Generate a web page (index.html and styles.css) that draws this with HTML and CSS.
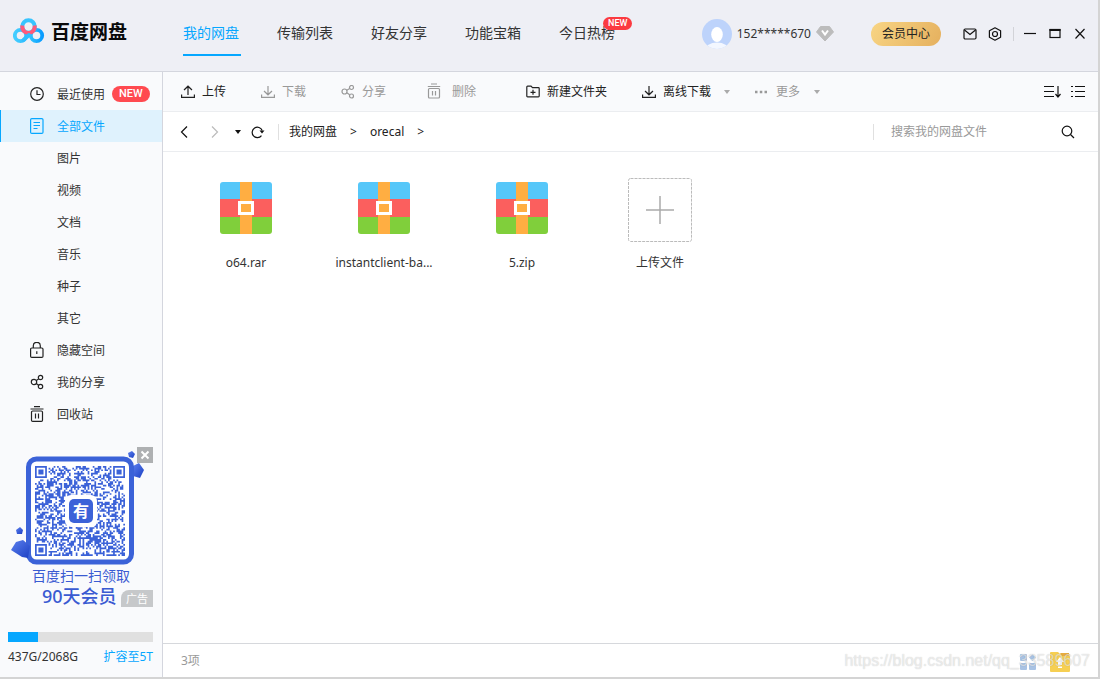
FILE: index.html
```html
<!DOCTYPE html>
<html lang="zh-CN">
<head>
<meta charset="utf-8">
<title>百度网盘</title>
<link rel="stylesheet" href="styles.css">
</head>
<body>
<div class="window">
  <header class="header">
    <div class="brand">
      <svg width="32" height="26" viewBox="0 0 32 26" fill="none">
        <defs>
          <linearGradient id="lg-left" x1="0" x2="1"><stop offset="0" stop-color="#43cdff"/><stop offset="1" stop-color="#2fbcff"/></linearGradient>
          <linearGradient id="lg-right" x1="0" x2="1"><stop offset="0" stop-color="#2cc0ff"/><stop offset="1" stop-color="#0a9cff"/></linearGradient>
        </defs>
        <circle cx="7.500" cy="17.500" r="5.700" stroke="url(#lg-left)" stroke-width="3.800"/>
        <circle cx="23.500" cy="17.500" r="5.700" stroke="url(#lg-right)" stroke-width="3.800"/>
        <circle cx="15.500" cy="8.500" r="6.300" fill="#eeeff5" stroke="#37c4ff" stroke-width="4"/>
        <path d="M9.300 7.500A6.300 6.300 0 1 0 21.700 7.500" stroke="#ff5a7b" stroke-width="4"/>
        <path d="M10.500 22L16 17" stroke="#2fbfff" stroke-width="3.800" stroke-linecap="round"/>
      </svg>
      <span class="brand-name">百度网盘</span>
    </div>
    <nav class="nav">
      <a class="nav-link nav-link--active" href="#">我的网盘</a>
      <a class="nav-link" href="#">传输列表</a>
      <a class="nav-link" href="#">好友分享</a>
      <a class="nav-link" href="#">功能宝箱</a>
      <a class="nav-link" href="#">今日热榜<span class="nav-badge">NEW</span></a>
    </nav>
    <div class="account">
      <svg width="30" height="30" viewBox="0 0 30 30">
        <defs><clipPath id="avatar-clip"><circle cx="15" cy="15" r="15"/></clipPath></defs>
        <g clip-path="url(#avatar-clip)">
          <rect width="30" height="30" fill="#bdd3fb"/>
          <ellipse cx="15" cy="31" rx="12" ry="7.500" fill="#f3f7ff"/>
          <ellipse cx="15" cy="15.500" rx="5.800" ry="7.500" fill="#fff"/>
        </g>
      </svg>
      <span class="account-name">152*****670</span>
      <svg width="18" height="16" viewBox="0 0 18 16">
        <path d="M4.500 0.500H13.500L17.500 6L9 15L0.500 6Z" fill="#bcbcbc" stroke="#bcbcbc" stroke-linejoin="round"/>
        <path d="M6 4.500L9 8.500L12 4.500" fill="none" stroke="#fff" stroke-width="2"/>
      </svg>
    </div>
    <button class="vip" type="button">会员中心</button>
    <div class="quick">
      <button class="icon-btn" type="button" aria-label="消息"><svg width="14" height="14" viewBox="0 0 14 14"><rect x="1" y="2" width="12" height="10" rx="1.200"/><path d="M1.500 3L7 7.500L12.500 3"/></svg></button>
      <button class="icon-btn" type="button" aria-label="设置"><svg width="14" height="14" viewBox="0 0 14 14"><path d="M7 0.800L12.600 3.800V10.200L7 13.200L1.400 10.200V3.800Z" stroke-linejoin="round"/><circle cx="7" cy="7" r="2.500"/></svg></button>
    </div>
    <div class="controls">
      <button class="icon-btn" type="button" aria-label="最小化"><svg width="12" height="14" viewBox="0 0 12 14"><path d="M0 6.500H12"/></svg></button>
      <button class="icon-btn" type="button" aria-label="最大化"><svg width="12" height="14" viewBox="0 0 12 14"><rect x="1" y="2.500" width="10" height="8"/><path d="M0.500 3H11.500" stroke-width="2"/></svg></button>
      <button class="icon-btn" type="button" aria-label="关闭"><svg width="12" height="14" viewBox="0 0 12 14"><path d="M1.500 2L10.500 11.500M10.500 2L1.500 11.500"/></svg></button>
    </div>
  </header>

  <div class="body">
    <aside class="sidebar">
      <nav class="menu">
        <a class="menu-item" href="#"><svg class="menu-icon" width="14" height="16" viewBox="0 0 14 16"><circle cx="7" cy="8" r="6.300"/><path d="M7 4.200V8.500H10.500"/></svg><span>最近使用</span><span class="badge">NEW</span></a>
        <a class="menu-item menu-item--active" href="#"><svg class="menu-icon" width="14" height="16" viewBox="0 0 14 16"><rect x="0.600" y="0.600" width="12.400" height="14.800" rx="1.200"/><path d="M3.500 4.500H10M3.500 7.500H10M3.500 10.500H7.500"/></svg><span>全部文件</span></a>
        <a class="menu-item menu-item--sub" href="#"><span>图片</span></a>
        <a class="menu-item menu-item--sub" href="#"><span>视频</span></a>
        <a class="menu-item menu-item--sub" href="#"><span>文档</span></a>
        <a class="menu-item menu-item--sub" href="#"><span>音乐</span></a>
        <a class="menu-item menu-item--sub" href="#"><span>种子</span></a>
        <a class="menu-item menu-item--sub" href="#"><span>其它</span></a>
        <a class="menu-item" href="#"><svg class="menu-icon" width="14" height="16" viewBox="0 0 14 16"><rect x="0.600" y="6" width="12.400" height="9.400" rx="1.200"/><path d="M3.300 6V3.800A3.500 3.500 0 0 1 10.300 3.800V6M6.800 9.300V12"/></svg><span>隐藏空间</span></a>
        <a class="menu-item" href="#"><svg class="menu-icon" width="14" height="16" viewBox="0 0 14 16"><circle cx="4" cy="8" r="2.700"/><circle cx="10.500" cy="3.500" r="2.200"/><circle cx="10.500" cy="12.500" r="2.200"/><path d="M6.300 6.500L8.600 4.900M6.300 9.500L8.600 11.200"/></svg><span>我的分享</span></a>
        <a class="menu-item" href="#"><svg class="menu-icon" width="14" height="16" viewBox="0 0 14 16"><path d="M4 0.700H10M0.500 3H13.500"/><rect x="1.500" y="5" width="11" height="10.400" rx="1.200"/><path d="M5.500 7.500V12.500M8.500 7.500V12.500"/></svg><span>回收站</span></a>
      </nav>

      <div class="promo">
        <svg class="promo-art" width="145" height="160" viewBox="0 0 145 160">
          <defs><linearGradient id="gem" x1="0" x2="1" y2="1"><stop offset="0" stop-color="#5c80ee"/><stop offset="1" stop-color="#1c40c4"/></linearGradient></defs>
          <path d="M120 6L124 4L127 7L125 11L121 10Z" fill="url(#gem)"/>
          <path d="M125 19L131 16L136 23L132 31L125 29Z" fill="url(#gem)"/>
          <path d="M8 83L12 80L15 83L14 87L9 87Z" fill="url(#gem)"/>
          <rect x="20.500" y="12" width="103" height="103" rx="8" fill="#fff" stroke="#3b62d8" stroke-width="5"/>
          <path d="M3 103L8 95L15 93L22 99L20 111L14 110Z" fill="url(#gem)"/>
          <svg x="27" y="19" width="90" height="90" viewBox="0 0 53 53"><path id="qr" fill="#3b62d8"/></svg>
          <rect x="57" y="48" width="32" height="32" rx="6" fill="#fff"/>
          <rect x="61" y="52" width="24" height="24" rx="5" fill="#3b62d8"/>
          <text class="promo-logo" x="73" y="70" text-anchor="middle">有</text>
          <text class="promo-line" x="24" y="134">百度扫一扫领取</text>
          <text class="promo-offer" x="34" y="156">90天会员</text>
        </svg>
        <button class="promo-close" type="button" aria-label="关闭广告"><svg width="10" height="10" viewBox="0 0 10 10"><path d="M1.500 1.500L8.500 8.500M8.500 1.500L1.500 8.500"/></svg></button>
        <span class="promo-tag">广告</span>
      </div>

      <div class="storage">
        <div class="storage-bar"><div class="storage-used" style="width:21%"></div></div>
        <div class="storage-row"><span>437G/2068G</span><a class="storage-link" href="#">扩容至5T</a></div>
      </div>
    </aside>

    <main class="main">
      <div class="toolbar">
        <div class="tools">
          <button class="tool" type="button"><svg width="14" height="14" viewBox="0 0 14 14"><path d="M0.600 9.500V12.400H13.400V9.500M7 10V1.500M3 5L7 1.200L11 5"/></svg>上传</button>
          <button class="tool tool--muted" type="button"><svg width="14" height="14" viewBox="0 0 14 14"><path d="M0.600 9.500V12.400H13.400V9.500M7 1V9.500M3 6L7 9.800L11 6"/></svg>下载</button>
          <button class="tool tool--muted" type="button"><svg width="14" height="14" viewBox="0 0 14 14"><circle cx="3.500" cy="6.500" r="2.500"/><circle cx="10.500" cy="2.500" r="2"/><circle cx="10.500" cy="11" r="2"/><path d="M5.800 5.200L8.700 3.500M5.800 7.800L8.700 9.800"/></svg>分享</button>
          <button class="tool tool--muted tool--wide" type="button"><svg width="14" height="18" viewBox="0 0 14 18"><path d="M4 1H10M0.800 3.500H13.200"/><rect x="1.500" y="5.500" width="11" height="9.500" rx="1"/><path d="M5.500 8V12.500M8.500 8V12.500"/></svg>删除</button>
        </div>
        <div class="tools">
          <button class="tool" type="button"><svg width="14" height="14" viewBox="0 0 14 14"><path d="M0.800 2Q0.800 1.100 1.600 1.100H5L6.500 2.700H12.400Q13.200 2.700 13.200 3.500V11Q13.200 11.800 12.400 11.800H1.600Q0.800 11.800 0.800 11ZM7 4.800V9.800M4.500 7.300H9.500"/></svg>新建文件夹</button>
          <button class="tool" type="button"><svg width="14" height="14" viewBox="0 0 14 14"><path d="M0.600 9.500V12.400H13.400V9.500M7 1V9.500M3 6L7 9.800L11 6"/></svg>离线下载<span class="caret"></span></button>
        </div>
        <button class="tool tool--muted tool--more" type="button"><svg width="14" height="14" viewBox="0 0 14 14"><path d="M1 7H3.500M5.800 7H8.300M10.500 7H13" stroke-width="2.500"/></svg>更多<span class="caret"></span></button>
        <div class="views">
          <button class="icon-btn" type="button" aria-label="排序"><svg width="17" height="14" viewBox="0 0 17 14"><path d="M0 1.500H10M0 6.500H10M0 11.500H10M14 1V12M11.500 9L14 12L16.500 9"/></svg></button>
          <button class="icon-btn" type="button" aria-label="列表"><svg width="14" height="14" viewBox="0 0 14 14"><path d="M0 1.500H2M4 1.500H14M0 6.500H2M4 6.500H14M0 11.500H2M4 11.500H14"/></svg></button>
        </div>
      </div>

      <div class="pathbar">
        <div class="history">
          <button class="icon-btn" type="button" aria-label="后退"><svg width="8" height="14" viewBox="0 0 8 14"><path d="M7 1.500L1.500 7L7 12.500"/></svg></button>
          <button class="icon-btn icon-btn--off" type="button" aria-label="前进"><svg width="8" height="14" viewBox="0 0 8 14"><path d="M1 1.500L6.500 7L1 12.500"/></svg></button>
        </div>
        <button class="icon-btn" type="button" aria-label="历史"><span class="caret caret--dark"></span></button>
        <button class="icon-btn refresh" type="button" aria-label="刷新"><svg width="14" height="14" viewBox="0 0 14 14"><path d="M10.500 10.600A5.200 5.200 0 1 1 11.200 5.500"/><path d="M8.500 5.500H13.500L11 8.500Z" fill="currentColor" stroke="none"/></svg></button>
        <div class="crumbs"><a href="#">我的网盘</a><span>&gt;</span><a href="#">orecal</a><span>&gt;</span></div>
        <form class="search">
          <input class="search-input" type="search" aria-label="搜索" placeholder="搜索我的网盘文件">
          <button class="icon-btn" type="submit" aria-label="搜索"><svg width="14" height="14" viewBox="0 0 14 14"><circle cx="6" cy="6" r="4.800"/><path d="M9.500 9.500L13 13"/></svg></button>
        </form>
      </div>

      <div class="files">
        <a class="file" href="#"><span class="file-art"><svg width="52" height="52"><use href="#archive"/></svg></span>o64.rar</a>
        <a class="file" href="#"><span class="file-art"><svg width="52" height="52"><use href="#archive"/></svg></span>instantclient-ba...</a>
        <a class="file" href="#"><span class="file-art"><svg width="52" height="52"><use href="#archive"/></svg></span>5.zip</a>
        <button class="file" type="button"><span class="file-art"><svg width="64" height="64" viewBox="0 0 64 64" fill="none"><rect x="0.500" y="0.500" width="63" height="63" rx="2" stroke="#bbb" stroke-dasharray="3 1"/><path d="M18 32H46M32 18V46" stroke="#aaa" stroke-width="1.500"/></svg></span>上传文件</button>
      </div>

      <footer class="status">
        <span>3项</span>
        <div class="status-icons">
          <svg width="16" height="16" viewBox="0 0 16 16" fill="#a9c3e4"><rect width="7" height="7" rx="1"/><path d="M12.500 0L16 3.500L12.500 7L9 3.500Z"/><rect y="9" width="7" height="7" rx="1"/><rect x="9" y="9" width="7" height="7" rx="1"/></svg>
          <svg width="20" height="20" viewBox="0 0 20 20"><path d="M0 1Q0 0 1 0H8L10 2H19Q20 2 20 3V19Q20 20 19 20H1Q0 20 0 19Z" fill="#f6cf52"/><path d="M10 1H19V4H12Z" fill="#e6ab3f"/><path d="M10 5L14 10H12V13H8V10H6ZM8 14.500H12V16H8Z" fill="#fff"/></svg>
        </div>
        <span class="watermark">https://blog.csdn.net/qq_33589607</span>
      </footer>
    </main>
  </div>
</div>

<svg class="defs" width="0" height="0" aria-hidden="true">
  <symbol id="archive" viewBox="0 0 52 52">
    <path d="M0 17V3Q0 0 3 0H49Q52 0 52 3V17Z" fill="#56c7f9"/>
    <path d="M0 17H52V35H0Z" fill="#fb5f5e"/>
    <path d="M0 35H52V49Q52 52 49 52H3Q0 52 0 49Z" fill="#80cf3b"/>
    <path d="M20 0H32V52H20Z" fill="#ffae42"/>
    <rect x="19.500" y="20.500" width="13" height="11" fill="#ffae42" stroke="#fff" stroke-width="3"/>
  </symbol>
</svg>
<script src="qr.js"></script>
</body>
</html>
```

FILE: styles.css
```css
* { box-sizing: border-box; }

body {
  margin: 0;
  font-family: "Noto Sans", "Noto Sans CJK SC", sans-serif;
  font-size: 12px;
  line-height: 18px;
  color: #333;
  background: #d4d4d4;
}

a { color: inherit; text-decoration: none; }

button {
  padding: 0;
  border: 0;
  background: none;
  font: inherit;
  color: inherit;
}

svg { display: block; flex: none; }

.defs { position: absolute; }

.window {
  display: flex;
  flex-direction: column;
  height: calc(100vh - 2px);
  margin-right: 2px;
  background: #fff;
}

.icon-btn { display: flex; align-items: center; color: #111; }
.icon-btn svg, .tool svg, .menu-icon { fill: none; stroke: currentColor; stroke-width: 1.2px; }
.icon-btn--off { color: #bbb; }

/* Header */
.header {
  display: flex;
  align-items: center;
  height: 72px;
  padding: 0 12px 4px 13px;
  background: #eeeff5;
  border-bottom: 1px solid #d4d6de;
}

.brand { display: flex; align-items: center; gap: 6px; width: 170px; height: 60px; padding-bottom: 6px; }
.brand-name { padding-top: 2px; font-size: 19px; line-height: 28px; font-weight: 700; color: #0a0a0a; }

.nav { display: flex; gap: 36px; margin-right: auto; }
.nav-link {
  position: relative;
  width: 58px;
  padding: 11px 0;
  border-bottom: 2px solid transparent;
  font-size: 14px;
  line-height: 20px;
  white-space: nowrap;
}
.nav-link--active { color: #06a7ff; border-color: #06a7ff; }
.nav-badge {
  position: absolute;
  top: 5px;
  left: 44px;
  padding: 0 5px;
  border-radius: 7px;
  background: #fb3a40;
  color: #fff;
  font: 500 9px/13px Roboto, sans-serif;
}

.account { display: flex; align-items: center; gap: 5px; margin-right: 37px; }
.account-name { font-size: 12px; }

.vip {
  padding: 3px 11px;
  margin-right: 22px;
  border-radius: 12px;
  background: linear-gradient(120deg, #f8d584, #e5b05e);
  color: #222;
}

.quick { display: flex; gap: 11px; padding-right: 11px; }
.controls { display: flex; gap: 13px; padding-left: 10px; border-left: 1px solid #d2d3d8; }

/* Body */
.body { display: flex; flex: 1; min-height: 0; }

.sidebar {
  display: flex;
  flex-direction: column;
  width: 163px;
  padding-top: 6px;
  background: #f9fafc;
  border-right: 1px solid #d4d6de;
}

.menu-item {
  display: flex;
  align-items: center;
  height: 32px;
  padding-left: 29px;
  border-left: 1px solid transparent;
  line-height: 16px;
}
.menu-item > span:not(.badge) { padding-top: 2px; }
.menu-icon { margin-right: 13px; color: #222; }
.menu-item--sub { padding-left: 56px; }
.menu-item--active { background: #dff2fd; border-color: #06a7ff; color: #06a7ff; }
.menu-item--active .menu-icon { color: inherit; }

.badge {
  margin-left: 7px;
  padding: 0 7px;
  border-radius: 8px;
  background: #ff4a50;
  color: #fff;
  font: 500 11px/16px Roboto, sans-serif;
}

.promo { position: relative; width: 145px; margin: 17px 9px 0 8px; }
.promo-close {
  position: absolute;
  top: 0;
  right: 0;
  display: grid;
  place-items: center;
  width: 16px;
  height: 16px;
  background: #aeb0b2;
}
.promo-close svg { stroke: #fff; stroke-width: 2px; }
.promo-tag {
  position: absolute;
  right: 0;
  bottom: 0;
  width: 32px;
  border-top-left-radius: 8px;
  background: #c6c8ca;
  color: #fff;
  font-size: 11px;
  line-height: 17px;
  text-align: center;
}
.promo-logo { font-size: 16px; font-weight: 700; fill: #fff; }
.promo-line { font-size: 14px; fill: #3a5bd2; }
.promo-offer { font-size: 18px; font-weight: 500; fill: #3a5bd2; }

.storage { margin: auto 9px 11px 8px; }
.storage-bar { height: 10px; background: #e0e0e0; }
.storage-used { height: 100%; background: #06a7ff; }
.storage-row { display: flex; justify-content: space-between; margin-top: 6px; }
.storage-link { color: #06a7ff; }

/* Main */
.main { display: flex; flex: 1; flex-direction: column; min-width: 0; }

.toolbar {
  display: flex;
  align-items: center;
  height: 40px;
  padding: 0 13px 0 18px;
  background: #f9fafc;
  border-bottom: 1px solid #ebedf0;
}
.tools { display: flex; gap: 35px; margin-right: 50px; }
.tools + .tools { margin-right: 24px; }
.tool { display: flex; align-items: center; gap: 7px; white-space: nowrap; color: #222; }
.tool--muted { color: #999; }
.tool--wide { gap: 11px; padding-left: 6px; }
.tool--more { gap: 8px; }

.caret {
  margin: 0 0 0 6px;
  border: 3px solid transparent;
  border-top: 4px solid #aaa;
  border-bottom: 0;
}
.caret--dark { margin: 0; border-top-color: #111; }

.views { display: flex; gap: 10px; margin-left: auto; }

.pathbar {
  display: flex;
  align-items: center;
  height: 40px;
  padding: 0 23px 0 17px;
  border-bottom: 1px solid #ebedf0;
}
.history { display: flex; gap: 23px; margin-right: 16px; }
.refresh { margin: 0 13px 0 10px; }
.crumbs { display: flex; gap: 13px; padding-left: 10px; line-height: 16px; border-left: 1px solid #e0e0e0; color: #222; }

.search { display: flex; align-items: center; margin: 0 0 0 auto; }
.search-input {
  width: 188px;
  height: 16px;
  padding: 0 0 0 17px;
  border: 0;
  border-left: 1px solid #e0e0e0;
  outline: 0;
  background: none;
  font: inherit;
}
.search-input::placeholder { color: #999; }

.files {
  display: grid;
  grid-template-columns: repeat(auto-fill, 138px);
  align-content: start;
  flex: 1;
  padding: 26px 14px;
}
.file { display: flex; flex-direction: column; align-items: center; gap: 12px; }
.file-art { display: grid; place-items: center; height: 64px; }
a.file .file-art { padding-bottom: 4px; }

.status {
  position: relative;
  display: flex;
  align-items: center;
  justify-content: space-between;
  height: 34px;
  padding: 0 28px 0 18px;
  border-top: 1px solid #d6d8dc;
  color: #999;
}
.status-icons { display: flex; align-items: center; gap: 14px; padding-top: 3px; }
.watermark {
  position: absolute;
  right: 8px;
  top: 8px;
  font: 16px/18px "Liberation Sans", sans-serif;
  color: rgba(255, 255, 255, 0.6);
  text-shadow: 0 0 1px rgba(0, 0, 0, 0.24);
}
```

FILE: qr.js
```js
// Fills the promo code with a 53x53 grid of modules and three corner markers.
const SIZE = 53;
let seed = 20231;
const next = () => (seed = (seed * 1103515245 + 12345) % 2147483648) / 2147483648;

function marker(x, y, left, top) {
  const dx = x - left, dy = y - top;
  if (dx < -1 || dy < -1 || dx > 7 || dy > 7) return null;
  const ring = Math.max(Math.abs(dx - 3), Math.abs(dy - 3));
  return ring === 3 || ring <= 1;
}

let d = "";
for (let y = 0; y < SIZE; y++) {
  for (let x = 0; x < SIZE; x++) {
    const random = next() > 0.5;
    const on = marker(x, y, 0, 0) ?? marker(x, y, SIZE - 7, 0) ?? marker(x, y, 0, SIZE - 7) ?? random;
    if (on) d += `M${x} ${y}h1v1h-1z`;
  }
}
document.getElementById("qr").setAttribute("d", d);
```
